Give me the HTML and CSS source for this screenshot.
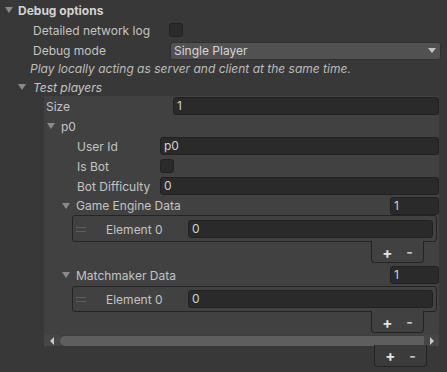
FILE: index.html
```html
<!DOCTYPE html>
<html>
<head>
<meta charset="utf-8">
<link rel="stylesheet" href="styles.css">
</head>
<body>
<div class="inspector">
  <div class="row head"><span class="tri"></span><span class="title">Debug options</span></div>
  <div class="row prop"><span class="label w136">Detailed network log</span><span class="checkbox"></span></div>
  <div class="row prop mode"><span class="label w136">Debug mode</span><div class="dropdown"><span>Single Player</span><span class="arrow"></span></div></div>
  <div class="help">Play locally acting as server and client at the same time.</div>
  <div class="row fold l1"><span class="tri"></span><span class="ital">Test players</span></div>
  <div class="list">
    <div class="lrow size"><span class="label wsize">Size</span><div class="field">1</div></div>
    <div class="lrow p0"><span class="tri"></span><span>p0</span></div>
    <div class="lrow sub"><span class="label w83">User Id</span><div class="field">p0</div></div>
    <div class="lrow sub"><span class="label w83">Is Bot</span><span class="checkbox"></span></div>
    <div class="lrow sub"><span class="label w83">Bot Difficulty</span><div class="field">0</div></div>
    <div class="lrow arr"><span class="tri"></span><span class="arrname">Game Engine Data</span><div class="field count">1</div></div>
    <div class="box">
      <div class="elem"><span class="handle"></span><span class="elabel">Element 0</span><div class="field">0</div></div>
    </div>
    <div class="footer inner"><span class="plus">+</span><span class="minus">-</span></div>
    <div class="lrow arr mm"><span class="tri"></span><span class="arrname">Matchmaker Data</span><div class="field count">1</div></div>
    <div class="box b2">
      <div class="elem"><span class="handle"></span><span class="elabel">Element 0</span><div class="field">0</div></div>
    </div>
    <div class="footer inner"><span class="plus">+</span><span class="minus">-</span></div>
    <div class="hscroll">
      <div class="sbtn left"><span class="larr"></span></div>
      <div class="thumb"></div>
      <div class="sbtn right"><span class="rarr"></span></div>
    </div>
  </div>
  <div class="footer outer"><span class="plus">+</span><span class="minus">-</span></div>
</div>
</body>
</html>
```

FILE: styles.css
```css
html, body {
  margin: 0;
  padding: 0;
  background: #383838;
}
body {
  font-family: Inter, "Noto Sans", sans-serif;
  font-size: 12px;
  color: #c4c4c4;
  width: 447px;
  height: 372px;
  overflow: hidden;
}
.inspector {
  display: flex;
  flex-direction: column;
}
.row {
  display: flex;
  align-items: center;
  height: 20px;
  flex: none;
}
.tri {
  width: 0;
  height: 0;
  border-left: 4px solid transparent;
  border-right: 4px solid transparent;
  border-top: 6px solid #8a8a8a;
  flex: none;
}
.head .tri {
  margin-left: 5px;
  margin-right: 5px;
}
.title {
  font-weight: 700;
  color: #d2d2d2;
}
.prop {
  padding-left: 33px;
}
.label {
  flex: none;
  white-space: nowrap;
}
.w136 { width: 136px; }
.checkbox {
  width: 12px;
  height: 12px;
  background: #2b2b2b;
  border: 1px solid #222222;
  border-radius: 3px;
  flex: none;
}
.mode {
  margin-top: 1px;
  height: 19px;
}
.dropdown {
  margin-left: 1px;
  width: 262px;
  height: 16px;
  background: #515151;
  border: 1px solid #303030;
  border-radius: 3px;
  display: flex;
  align-items: center;
  justify-content: space-between;
  padding-left: 3px;
  padding-right: 4px;
  box-sizing: content-box;
  color: #d6d6d6;
  flex: none;
}
.dropdown .arrow {
  width: 0;
  height: 0;
  border-left: 4px solid transparent;
  border-right: 4px solid transparent;
  border-top: 5px solid #c4c4c4;
}
.help {
  font-style: italic;
  height: 18px;
  line-height: 18px;
  padding-left: 30px;
  color: #bcbcbc;
  flex: none;
}
.fold {
  height: 18px;
  padding-left: 18px;
}
.fold .tri {
  margin-right: 7px;
}
.ital {
  font-style: italic;
}
.list {
  margin-left: 44px;
  width: 395px;
  height: 249px;
  background: #414141;
  display: flex;
  flex-direction: column;
  flex: none;
}
.lrow {
  display: flex;
  align-items: center;
  height: 20px;
  flex: none;
}
.field {
  flex: 1;
  height: 16px;
  line-height: 16px;
  background: #2a2a2a;
  border: 1px solid #212121;
  border-radius: 3px;
  padding-left: 3px;
  color: #d2d2d2;
  min-width: 0;
}
.size {
  padding-left: 2px;
}
.wsize { width: 127px; }
.p0 {
  padding-left: 3px;
}
.p0 .tri {
  margin-right: 6px;
}
.sub {
  padding-left: 33px;
}
.w83 { width: 83px; }
.arr {
  padding-left: 18px;
  height: 19px;
}
.arr .tri {
  margin-right: 6px;
}
.arrname {
  flex: 1;
}
.field.count {
  flex: none;
  width: 44px;
}
.box {
  margin-left: 28px;
  margin-right: 2px;
  border: 1px solid #242424;
  border-radius: 3px;
  padding: 4px 3px 3px 3px;
  flex: none;
}
.b2 {
  padding-top: 3px;
}
.elem {
  display: flex;
  align-items: center;
  height: 18px;
}
.handle {
  width: 10px;
  height: 3px;
  border-top: 1px solid #5c5c5c;
  border-bottom: 1px solid #5c5c5c;
  margin-right: 20px;
  flex: none;
}
.elabel {
  width: 82px;
  flex: none;
}
.footer {
  align-self: flex-end;
  width: 51px;
  height: 20px;
  border: 1px solid #242424;
  border-top: none;
  border-radius: 0 0 4px 4px;
  background: #414141;
  display: flex;
  align-items: center;
  justify-content: center;
  gap: 14px;
  position: relative;
  margin-top: -1px;
  padding-top: 1px;
  flex: none;
}
.footer.inner {
  margin-right: 15px;
}
.footer.outer {
  margin-right: 20px;
  margin-top: 0;
  padding-top: 0;
  height: 21px;
  background: #3b3b3b;
}
.plus {
  font-weight: 700;
  color: #e4e4e4;
  font-size: 15px;
  line-height: 1;
}
.minus {
  font-weight: 700;
  color: #c4c4c4;
  font-size: 14px;
  line-height: 1;
}
.mm {
  height: 22px;
  padding-top: 1px;
}
.hscroll {
  margin-top: 2px;
  height: 11px;
  display: flex;
  align-items: center;
  background: #3e3e3e;
  flex: none;
}
.sbtn {
  height: 11px;
  display: flex;
  align-items: center;
  justify-content: center;
  background: #464646;
}
.sbtn.left {
  width: 16px;
}
.sbtn.right {
  width: 15px;
}
.larr {
  width: 0;
  height: 0;
  border-top: 4px solid transparent;
  border-bottom: 4px solid transparent;
  border-right: 4px solid #c8c8c8;
}
.rarr {
  width: 0;
  height: 0;
  border-top: 4px solid transparent;
  border-bottom: 4px solid transparent;
  border-left: 4px solid #c8c8c8;
}
.thumb {
  flex: 1;
  height: 10px;
  background: #5e5e5e;
  border-radius: 5px 0 0 5px;
}
```
